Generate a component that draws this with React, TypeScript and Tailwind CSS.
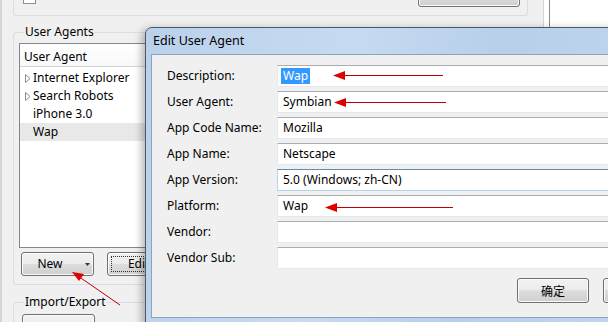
import type { ReactNode } from 'react'

// Win7-style "Edit User Agent" dialog lying over the User Agent Switcher options window.

const fields = [
  { label: 'Description:', value: 'Wap', selected: true },
  { label: 'User Agent:', value: 'Symbian' },
  { label: 'App Code Name:', value: 'Mozilla' },
  { label: 'App Name:', value: 'Netscape' },
  { label: 'App Version:', value: '5.0 (Windows; zh-CN)', hover: true },
  { label: 'Platform:', value: 'Wap' },
  { label: 'Vendor:', value: '' },
  { label: 'Vendor Sub:', value: '' },
]

const agents = [
  { name: 'Internet Explorer', folder: true },
  { name: 'Search Robots', folder: true },
  { name: 'iPhone 3.0' },
  { name: 'Wap', selected: true },
]

function Button({ children, className = '' }: { children?: ReactNode; className?: string }) {
  return (
    <div
      className={`h-[24px] shrink-0 border border-[#707070] rounded-[3px] bg-[linear-gradient(#f2f2f2_0%,#ebebeb_50%,#dddddd_50%,#cfcfcf_100%)] shadow-[inset_0_0_0_1px_#fbfbfb] flex items-center justify-center ${className}`}
    >
      {children}
    </div>
  )
}

function Expander() {
  return (
    <svg width="6" height="9" viewBox="0 0 6 9" className="shrink-0">
      <path d="M0.5 0.5 L5 4.5 L0.5 8.5 Z" fill="white" stroke="#8c8c8c" strokeWidth="1" />
    </svg>
  )
}

export default function App() {
  return (
    <div className="relative w-[608px] h-[322px] overflow-hidden bg-white text-[12px] text-black font-['Segoe_UI','Noto_Sans','Noto_Sans_CJK_SC',sans-serif]">
      {/* options window underneath */}
      <div className="w-[550px] h-full flex border-r border-[#8a8a8a]">
        <div className="w-[544px] h-full bg-[#f0f0f0] border-l-2 border-[#d6d6d6] border-r border-[#bdbdbd] flex flex-col pl-[11px]">
          {/* bottom of the top group box */}
          <div className="h-[16px] shrink-0 w-[515px] border border-t-0 border-[#d5dfe5] rounded-b-[3px] flex items-start">
            <div className="mt-[-9px] ml-[9px] w-[13px] h-[13px] border border-[#8e8f8f] bg-white" />
            <span className="mt-[-16px] ml-[14px] leading-[16px]">Remember setting</span>
            <Button className="mt-[-17px] ml-auto mr-[7px] w-[102px]" />
          </div>

          <fieldset className="mt-[8px] shrink-0 w-[515px] h-[261px] border border-[#d5dfe5] rounded-[3px] px-[5px] pb-[7px] flex flex-col">
            <legend className="ml-[5px] px-[1px] leading-[16px]">User Agents</legend>
            <div className="mt-[3px] h-[205px] shrink-0 border border-[#828790] bg-white flex flex-col">
              <div className="h-[23px] shrink-0 border-b border-[#d5d5d5] bg-[linear-gradient(#ffffff,#f7f8fa)] flex items-center pl-[4px] pt-[3px]">
                User Agent
              </div>
              <div className="pt-[2px] flex flex-col">
                {agents.map(a => (
                  <div
                    key={a.name}
                    className={`h-[18px] flex items-center pl-[5px] gap-[2px] ${a.selected ? 'bg-[#e8e8e8]' : ''}`}
                  >
                    {a.folder ? <Expander /> : <span className="w-[6px]" />}
                    <span>{a.name}</span>
                  </div>
                ))}
              </div>
            </div>
            <div className="mt-[4px] flex gap-[13px] pl-[2px]">
              <Button className="w-[73px] gap-[22px] pl-[12px]">
                <span>New</span>
                <svg width="5" height="3" viewBox="0 0 5 3">
                  <path d="M0 0 H5 L2.5 3 Z" fill="#333" />
                </svg>
              </Button>
              <Button className="w-[73px] p-[3px]">
                <div className="w-full h-full border border-dotted border-[#333] flex items-center justify-center">Edit...</div>
              </Button>
            </div>
          </fieldset>

          <fieldset className="mt-[9px] shrink-0 w-[515px] h-[40px] border border-[#d5dfe5] rounded-[3px] px-[5px]">
            <legend className="ml-[5px] px-[1px] leading-[16px]">Import/Export</legend>
            <Button className="mt-[4px] ml-[3px] w-[73px]" />
          </fieldset>
        </div>
      </div>

      {/* Edit User Agent dialog */}
      <div className="absolute left-[145px] top-[27px] w-[549px] border border-[#4d5866] rounded-t-[7px] bg-[linear-gradient(100deg,#b9d1ea_0%,#c6dbf1_35%,#b7cfe9_60%,#c4d9ef_100%)] shadow-[-3px_2px_8px_rgba(0,0,0,0.3)] flex flex-col px-[5px] pb-[6px]">
        <div className="h-[26px] flex items-center pl-[2px] text-[12.5px]">Edit User Agent</div>
        <div className="h-[264px] border border-[#8da2bb] bg-[#f0f0f0] flex flex-col pt-[10px] pl-[15px] pr-[12px]">
          <div className="flex flex-col gap-[4px]">
            {fields.map(f => (
              <div key={f.label} className="flex items-center h-[22px]">
                <span className="w-[110px] shrink-0">{f.label}</span>
                <div
                  className={`flex-1 h-[22px] border bg-white flex items-center pl-[3px] ${
                    f.hover
                      ? 'border-[#b7d5ea] border-t-[#5c8fb4]'
                      : 'border-[#e3e9ef] border-t-[#abadb3]'
                  }`}
                >
                  {f.selected ? (
                    <span className="bg-[#3399ff] text-white px-[2px] leading-[16px]">{f.value}</span>
                  ) : (
                    <span className="pl-[2px]">{f.value}</span>
                  )}
                </div>
              </div>
            ))}
          </div>
          <div className="mt-[9px] flex justify-end gap-[14px]">
            <Button className="w-[72px] h-[25px] border-[#3c7fb1] shadow-[inset_0_0_0_1px_#c9e6f7] font-['Noto_Sans_CJK_SC',sans-serif]">
              确定
            </Button>
            <Button className="w-[72px] h-[25px] font-['Noto_Sans_CJK_SC',sans-serif]">取消</Button>
          </div>
        </div>
      </div>

      {/* red annotation arrows */}
      <svg className="absolute inset-0 pointer-events-none" width="608" height="322" viewBox="0 0 608 322">
        <g stroke="#c00000" strokeWidth="1">
          <line x1="443" y1="75.5" x2="340" y2="75.5" />
          <line x1="446" y1="102.5" x2="341" y2="102.5" />
          <line x1="453" y1="207.5" x2="332" y2="207.5" />
          <line x1="120" y1="305" x2="78" y2="276" />
        </g>
        <g fill="#e00000">
          <polygon points="333,75.5 345,71 345,80" />
          <polygon points="334,102.5 346,98 346,107" />
          <polygon points="325,207.5 337,203 337,212" />
          <polygon points="72,272 84,274 79,281" />
        </g>
      </svg>
    </div>
  )
}
